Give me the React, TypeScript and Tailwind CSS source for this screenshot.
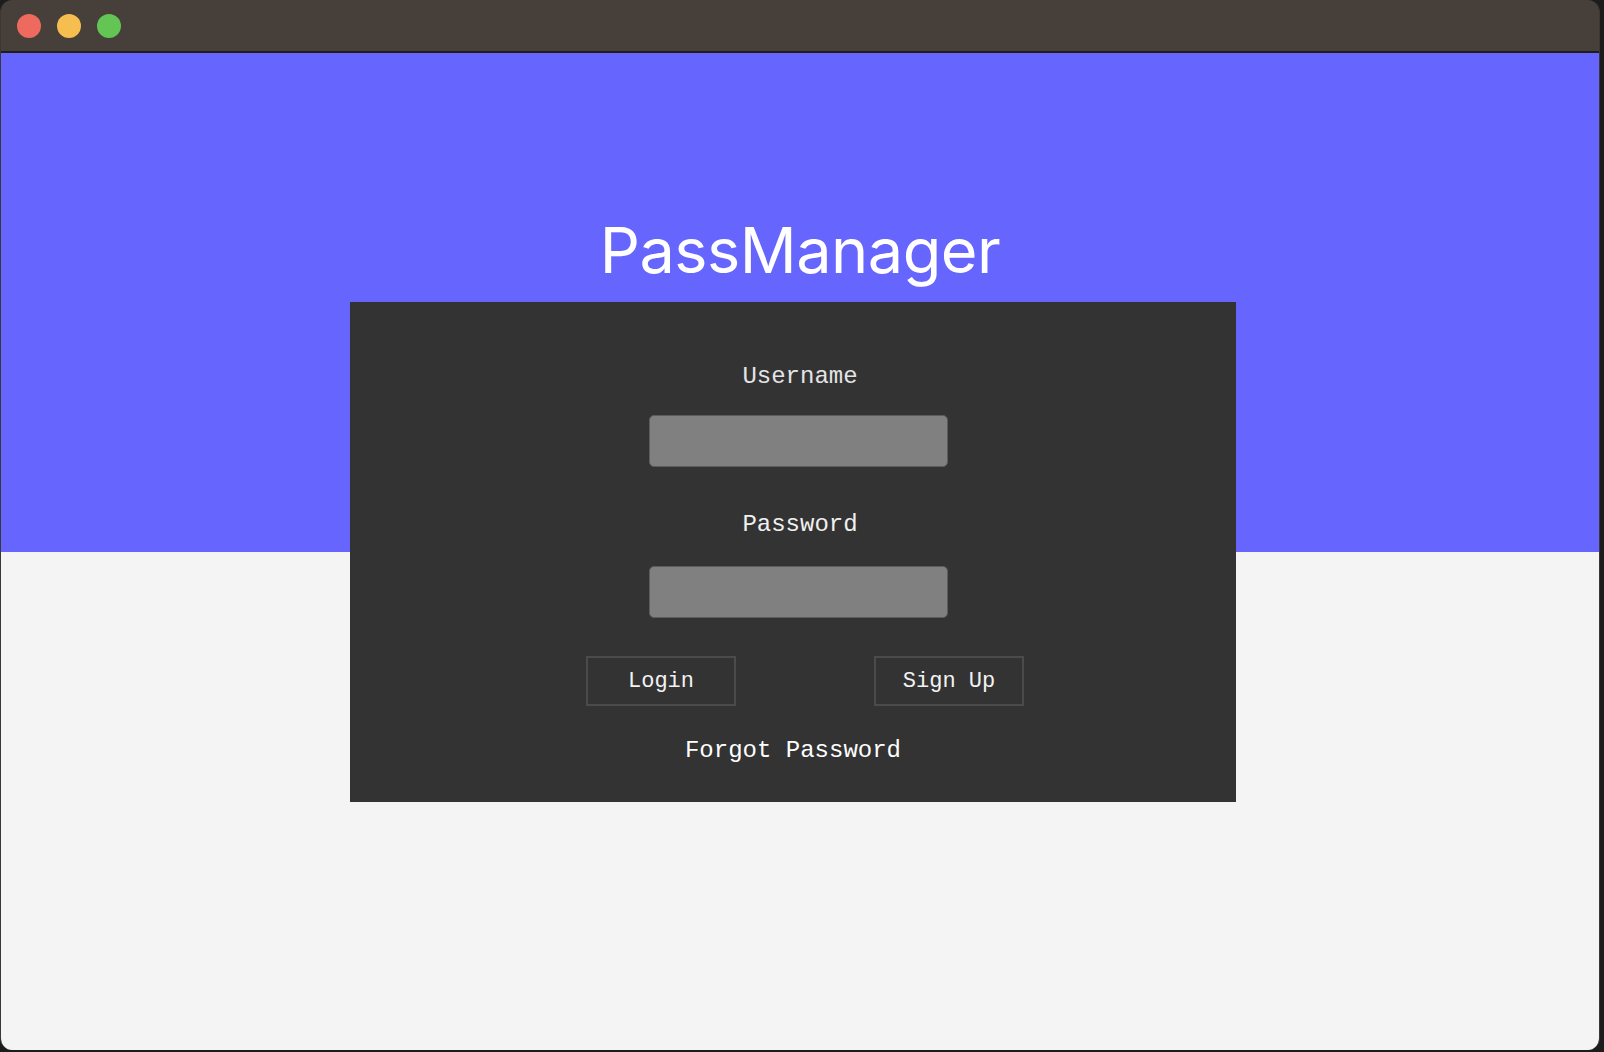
import React, { useState } from 'react';

const mono = "font-['Liberation_Mono','Courier_New',monospace]";

// Login window: title bar, blue header band and a dark card that overlaps both bands
export default function App() {
  const [username, setUsername] = useState('');
  const [password, setPassword] = useState('');

  return (
    <div className="w-[1604px] h-[1052px] bg-[#1c1c1c] overflow-hidden">
      <div className="w-[1600px] h-[1050px] rounded-[12px] overflow-hidden flex flex-col border-l border-r border-[#6a6560]/40">
        {/* title bar */}
        <div className="h-[53px] shrink-0 bg-[#463f3a] border-b-2 border-[#1f1c1a] flex items-center gap-[16px] pl-[16px]">
          <span className="w-[24px] h-[24px] rounded-full bg-[#ee6a5f]" />
          <span className="w-[24px] h-[24px] rounded-full bg-[#f5be4f]" />
          <span className="w-[24px] h-[24px] rounded-full bg-[#62c554]" />
        </div>

        {/* content */}
        <div className="flex-1 bg-[linear-gradient(to_bottom,#6666ff_499px,#f4f4f4_499px)]">
          <div className="pt-[166px] flex justify-center">
            <h1 className="text-[63px] leading-[63px] h-[63px] text-white font-['Inter','Liberation_Sans',sans-serif] tracking-[-0.5px]">
              PassManager
            </h1>
          </div>

          <div className="mt-[20px] pl-[349px]">
            <div className={`w-[886px] h-[500px] bg-[#333333] flex flex-col items-center ${mono}`}>
              <label className="mt-[63px] ml-[14px] text-[24px] leading-[24px] text-[#e4e4e4]">Username</label>
              <input
                value={username}
                onChange={(e) => setUsername(e.target.value)}
                className="mt-[26px] ml-[11px] w-[299px] h-[52px] rounded-[5px] bg-[#808080] border border-[#5c5c5c] outline-none px-3 text-white"
              />
              <label className="mt-[46px] ml-[14px] text-[24px] leading-[24px] text-[#f0f0f0]">Password</label>
              <input
                type="password"
                value={password}
                onChange={(e) => setPassword(e.target.value)}
                className="mt-[29px] ml-[11px] w-[299px] h-[52px] rounded-[5px] bg-[#808080] border border-[#5c5c5c] outline-none px-3 text-white"
              />
              <div className="mt-[38px] ml-[24px] flex gap-[138px]">
                <button className="w-[150px] h-[50px] border-2 border-[#4b4b4b] text-[22px] text-[#f2f2f2] flex items-center justify-center">
                  Login
                </button>
                <button className="w-[150px] h-[50px] border-2 border-[#4b4b4b] text-[22px] text-[#f2f2f2] flex items-center justify-center">
                  Sign Up
                </button>
              </div>
              <button className="mt-[33px] text-[24px] leading-[24px] text-white">Forgot Password</button>
            </div>
          </div>
        </div>
      </div>
    </div>
  );
}
